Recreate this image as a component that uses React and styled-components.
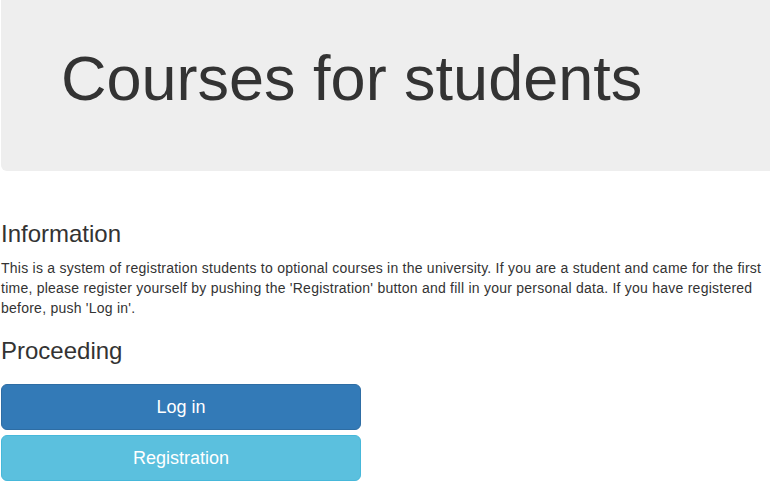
import React from "react";
import styled, { createGlobalStyle } from "styled-components";

const GlobalStyle = createGlobalStyle`
  html, body {
    margin: 0;
    padding: 0;
    overflow: hidden;
    background: #fff;
  }
  body {
    font-family: "Liberation Sans", Arial, Helvetica, sans-serif;
    font-size: 14px;
    line-height: 1.42857143;
    color: #333;
  }
  * {
    box-sizing: border-box;
  }
`;

const Page = styled.div`
  padding-left: 1px;
  width: 790px;
`;

const Jumbotron = styled.div`
  background: #eee;
  padding: 24px 60px 48px;
  border-radius: 0 0 6px 6px;
  margin-bottom: 50px;
`;

const Title = styled.h1`
  margin: 20px 0 10px;
  font-size: 63px;
  font-weight: 500;
  line-height: 1.1;
  color: #333;
`;

const Content = styled.div`
  width: 769px;
`;

const SectionTitle = styled.h3`
  margin: ${(p) => (p.$first ? "0" : "20px")} 0 10px;
  font-size: 24px;
  font-weight: 500;
  line-height: 1.1;
`;

const Text = styled.p`
  margin: 0;
  letter-spacing: 0.24px;
`;

const Actions = styled.div`
  width: 360px;
  display: flex;
  flex-direction: column;
  gap: 5px;
  margin-top: 20px;
`;

const Button = styled.button`
  display: block;
  width: 100%;
  height: 46px;
  padding: 10px 16px;
  font-family: "Liberation Sans", Arial, sans-serif;
  font-size: 18px;
  line-height: 1.3333333;
  color: #fff;
  border-radius: 6px;
  border: 1px solid ${(p) => (p.$variant === "info" ? "#46b8da" : "#2e6da4")};
  background: ${(p) => (p.$variant === "info" ? "#5bc0de" : "#337ab7")};
  cursor: pointer;
  text-align: center;
`;

export default function App() {
  return (
    <Page>
      <GlobalStyle />
      <Jumbotron>
        <Title>Courses for students</Title>
      </Jumbotron>
      <Content>
        <SectionTitle $first>Information</SectionTitle>
        <Text>
          This is a system of registration students to optional courses in the
          university. If you are a student and came for the first time, please
          register yourself by pushing the 'Registration' button and fill in
          your personal data. If you have registered before, push 'Log in'.
        </Text>
        <SectionTitle>Proceeding</SectionTitle>
        <Actions>
          <Button>Log in</Button>
          <Button $variant="info">Registration</Button>
        </Actions>
      </Content>
    </Page>
  );
}
